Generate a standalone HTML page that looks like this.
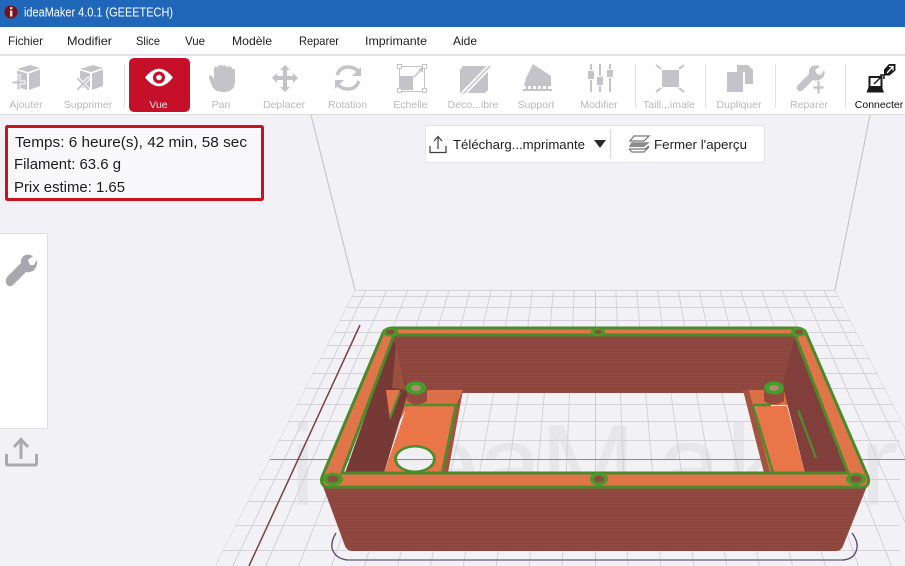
<!DOCTYPE html>
<html><head><meta charset="utf-8"><title>ideaMaker</title>
<style>html,body{margin:0;padding:0;background:#f1f1f6;width:905px;height:566px;overflow:hidden}svg{display:block;position:absolute;left:0;top:0}text{font-family:"Liberation Sans",sans-serif}</style></head>
<body>
<svg width="905" height="566" viewBox="0 0 905 566" xmlns="http://www.w3.org/2000/svg">
<defs>
<clipPath id="bed"><polygon points="355,290 835,290 975,566 215,566"/></clipPath>
<pattern id="scan" width="4" height="3" patternUnits="userSpaceOnUse"><rect width="4" height="3" fill="#91493f"/><rect width="4" height="1" fill="#8b4540"/></pattern>
<pattern id="rimtex" width="3" height="3" patternUnits="userSpaceOnUse"><rect width="3" height="3" fill="#e2764a"/><rect width="1" height="1" fill="#cf7243"/></pattern>
</defs>
<rect width="905" height="566" fill="#f1f1f6"/>

<!-- room -->
<path d="M311 115L355 290M870 115L835 290" stroke="#c6c6cd" stroke-width="1.2" fill="none"/>
<text y="505" x="290 350 415 478 540 657 726 790 860" font-size="115" fill="#e7e7eb">ideaMaker</text>
<g clip-path="url(#bed)" stroke="#d2d2d8" stroke-width="1" fill="none">
<path d="M200 290.5H900M200 296.5H900M200 307.5H900M200 320.5H900M200 332.5H900M200 345.5H900M200 358.5H900M200 373.5H900M200 388.5H900M200 404.5H900M200 421.5H900M200 440.5H900M200 479.5H900M200 501.5H900M200 525.5H900M200 550.5H900"/>
<path d="M615.8 290L627.9 566M636.6 290L660.9 566M657.4 290L693.8 566M678.2 290L726.8 566M699 290L759.7 566M719.8 290L792.6 566M740.6 290L825.6 566M761.4 290L858.5 566M782.2 290L891.5 566M803 290L924.4 566M823.8 290L957.3 566"/>
<path d="M574.2 290L562.1 566M553.4 290L529.1 566M532.6 290L496.2 566M511.8 290L463.2 566M491 290L430.3 566M470.2 290L397.4 566M449.4 290L364.4 566M428.6 290L331.5 566M407.8 290L298.5 566M387 290L265.6 566M366.2 290L232.7 566"/>
<path d="M355 290L215 566M835 290L975 566"/>
</g>
<path d="M595.5 291V566" stroke="#b9dcb9" stroke-width="1"/>
<path d="M270 459.5H905" stroke="#dc6474" stroke-width="1"/>
<path d="M360 325L249 566" stroke="#7d3f40" stroke-width="1.5"/>
<path d="M336 533Q331 541 332 548Q335 559 348 560H843Q855 559 857 548Q858 541 852 533" fill="none" stroke="#5d4c6c" stroke-width="1.4"/>
<path d="M348 560H843" stroke="#9a88a8" stroke-width="1.6"/>

<!-- model -->
<polygon points="393,335 795,335 795,393 393,393" fill="url(#scan)"/>
<!-- left interior -->
<polygon points="386,390 463,390 455,406 408,406 400,420 388,420" fill="#dc7048"/>
<polygon points="393,337 345,473 384,473 408,393" fill="#763936"/>
<polygon points="396,345 392,388 406,390" fill="#99503f"/>
<polygon points="386,390 400,390 390,420" fill="#e5744a"/>
<polygon points="407,406 455,406 441,473 384,473" fill="#ea7548"/>
<polygon points="463,390 448,473 441,473 456,404" fill="#a5533f"/>
<path d="M400 392L390 418" stroke="#4d8d2c" stroke-width="2.2"/>
<path d="M404 405H456L442 473" fill="none" stroke="#4d8d2c" stroke-width="2.6"/>
<ellipse cx="415" cy="459" rx="21" ry="14" fill="#4d8d2c"/>
<ellipse cx="415" cy="459" rx="18" ry="11.500" fill="#f0f0f4"/>
<path d="M397 459.500H433" stroke="#dc6474"/>
<!-- standoff left -->
<path d="M407 388V401Q416 408 427 401V388Z" fill="#96493f"/>
<ellipse cx="416" cy="388" rx="10.5" ry="6.5" fill="#3fa02a"/>
<ellipse cx="416" cy="388" rx="5" ry="3" fill="#b08a6a"/>
<!-- right interior -->
<polygon points="743,390 786,390 789,405 753,405 773,473 766,473" fill="#db7047"/>
<polygon points="795,336 847,473 805,473 783,387 785,375" fill="#813e3a"/>
<polygon points="743,390 749,390 770,473 764,473" fill="#a5533f"/>
<polygon points="755,406 787,406 805,473 773,473" fill="#ea7548"/>
<path d="M753 405H771M753 405L773 473" fill="none" stroke="#4d8d2c" stroke-width="2.6"/>
<path d="M798 410L816 458" stroke="#4d8d2c" stroke-width="2.4"/>
<path d="M764 388V401Q774 408 784 401V388Z" fill="#96493f"/>
<ellipse cx="774" cy="388" rx="10" ry="6.5" fill="#3fa02a"/>
<ellipse cx="774" cy="388" rx="5" ry="3" fill="#b08a6a"/>
<!-- front wall -->
<path d="M321 481L345 546Q347 551 353 551H836Q841 551 843 546L869 481Z" fill="url(#scan)"/>
<!-- rim -->
<path fill-rule="evenodd" d="M392 328H796Q803 328 806 333L868 477Q870 484 865 487H326Q320 484 322 477L383 333Q386 328 392 328ZM394 335H795L848 473H342Z" fill="url(#rimtex)" stroke="#4b8a2b" stroke-width="3"/>
<g fill="#4a9a2a">
<ellipse cx="390" cy="332" rx="8" ry="4.5"/><ellipse cx="598" cy="332" rx="7" ry="4"/><ellipse cx="799" cy="332" rx="8" ry="4.5"/>
<ellipse cx="333" cy="479" rx="10" ry="6.5"/><ellipse cx="599" cy="479" rx="9" ry="6.5"/><ellipse cx="856" cy="479" rx="10" ry="6.5"/>
</g>
<g fill="#8e4a3f">
<ellipse cx="390" cy="332" rx="4" ry="2.4"/><ellipse cx="598" cy="332" rx="3.5" ry="2"/><ellipse cx="799" cy="332" rx="4" ry="2.4"/>
<ellipse cx="333" cy="479" rx="5.5" ry="3.5"/><ellipse cx="599" cy="479" rx="5" ry="3.5"/><ellipse cx="856" cy="479" rx="5.5" ry="3.5"/>
</g>

<!-- chrome -->
<rect y="0" width="905" height="27" fill="#2067b9"/>
<circle cx="11" cy="12" r="6.5" fill="#7a1016"/>
<rect x="10" y="7" width="2.4" height="2.2" fill="#f3d9d9"/><rect x="10" y="10.5" width="2.4" height="6" fill="#f3d9d9"/>
<text x="24" y="16.5" font-size="12.500" fill="#fff" textLength="149" lengthAdjust="spacingAndGlyphs">ideaMaker 4.0.1 (GEEETECH)</text>
<rect y="27" width="905" height="28" fill="#fff"/>
<rect y="54" width="905" height="2" fill="#e4e4e6"/>
<g font-size="12" fill="#1e1e1e">
<text x="8" y="45" textLength="35" lengthAdjust="spacingAndGlyphs">Fichier</text>
<text x="67" y="45" textLength="45" lengthAdjust="spacingAndGlyphs">Modifier</text>
<text x="136" y="45" textLength="24" lengthAdjust="spacingAndGlyphs">Slice</text>
<text x="185" y="45" textLength="20" lengthAdjust="spacingAndGlyphs">Vue</text>
<text x="232" y="45" textLength="40" lengthAdjust="spacingAndGlyphs">Modèle</text>
<text x="299" y="45" textLength="40" lengthAdjust="spacingAndGlyphs">Reparer</text>
<text x="365" y="45" textLength="62" lengthAdjust="spacingAndGlyphs">Imprimante</text>
<text x="453" y="45" textLength="24" lengthAdjust="spacingAndGlyphs">Aide</text>
</g>
<rect y="56" width="905" height="58" fill="#fff"/>
<rect y="114" width="905" height="1" fill="#dcdce0"/>
<path d="M124.500 64V108M635.500 64V108M705.500 64V108M775.500 64V108M845.500 64V108" stroke="#e2e2e6"/>
<rect x="129" y="58" width="61" height="54" rx="5" fill="#c60f28"/>

<g font-size="10.500" fill="#b9b9bf" text-anchor="middle">
<text x="26" y="108">Ajouter</text>
<text x="88" y="108">Supprimer</text>
<text x="221" y="108">Pan</text>
<text x="284" y="108">Deplacer</text>
<text x="347.500" y="108">Rotation</text>
<text x="410.500" y="108">Echelle</text>
<text x="473" y="108">Deco...ibre</text>
<text x="536" y="108">Support</text>
<text x="599" y="108">Modifier</text>
<text x="669" y="108">Taill...imale</text>
<text x="739" y="108">Dupliquer</text>
<text x="809" y="108">Reparer</text>
</g>
<text x="158.500" y="108" font-size="10.500" fill="#f5e3e5" text-anchor="middle">Vue</text>
<text x="879" y="108" font-size="10.500" fill="#111" text-anchor="middle">Connecter</text>

<!-- toolbar icons -->
<g fill="#c3c3c9" stroke="none">
<!-- ajouter -->
<path d="M17 69L30 65L40 68L28 72ZM17 70.500L27 73.500V90L17 87ZM29 73.500L40 69.500V86L29 90Z"/>
<path d="M12 81H17V75H20V81H25V84H20V90H17V84H12Z" stroke="#fff" stroke-width="1"/>
<!-- supprimer -->
<path d="M80 69L93 65L103 68L91 72ZM80 70.500L90 73.500V90L80 87ZM92 73.500L103 69.500V86L92 90Z"/>
<path d="M78 77L83 82L88 77L90 79L85 84L90 89L88 91L83 86L78 91L76 89L81 84L76 79Z" stroke="#fff" stroke-width="1"/>
<!-- pan -->
<path d="M209 78Q209 74 212 76L214 79V68Q216 65 218 68V66Q220 64 222 66V66Q225 64 227 67Q230 65 232 68V69Q235 68 235 71V82Q234 92 224 92Q215 92 212 86Z"/>
<!-- move -->
<path d="M285 65L290 70H287V76H293V73L298 78L293 83V80H287V87H290L285 92L280 87H283V80H277V83L272 78L277 73V76H283V70H280Z"/>
<!-- scale -->
<path d="M399 76H413V90H399Z"/>
<path d="M417 71L423 66V73L421 71L414 78L413 77L420 70Z"/>
<!-- deco -->
<path d="M463 66H488V90L485 93H460V70Z"/>
<!-- support -->
<path d="M533 64L551 76L551 86H524L526 78Z"/>
<rect x="523" y="89" width="29" height="2"/>
<path d="M526 86h2v3h-2zM531 86h2v3h-2zM536 86h2v3h-2zM541 86h2v3h-2zM546 86h2v3h-2z"/>
<!-- modifier sliders -->
<path d="M590 64h2v6h-2zM590 80h2v12h-2zM599 64h2v12h-2zM599 86h2v6h-2zM609 64h2v5h-2zM609 78h2v14h-2z"/>
<rect x="588" y="71" width="6" height="8"/><rect x="597" y="77" width="6" height="8"/><rect x="607" y="70" width="6" height="7"/>
<!-- taille -->
<rect x="662" y="70" width="17" height="17"/>
<!-- dupliquer -->
<path d="M737 65H748L753 70V84H745V72H737Z"/>
<rect x="727" y="72" width="16" height="20"/>
<!-- reparer wrench -->
<path d="M797 89Q796 86 799 84L809 74Q808 68 813 66Q816 65 820 66L815 70L817 74L821 75L824 70Q826 76 821 79Q817 82 813 80L803 90Q799 93 797 89Z"/>
<path d="M813 86H817V80.500H820V86H824V89H820V94H817V89H813Z" stroke="#fff" stroke-width=".8"/>
</g>
<g fill="none" stroke="#c3c3c9">
<!-- scale frame -->
<path d="M399.500 66.500H424.500V91.500H399.500Z" stroke-width="1"/>
<path d="M397.500 64.500h4v4h-4zM422.500 64.500h4v4h-4zM397.500 88.500h4v4h-4zM422.500 88.500h4v4h-4z" fill="#fff" stroke-width="1"/>
<!-- rotate -->
<path d="M337 75Q340 67 348 67Q354 67 358 71M359 81Q356 89 348 89Q342 89 338 85" stroke-width="3.400"/>
<path d="M361 67V76H352ZM335 89V80H344Z" fill="#c3c3c9" stroke="none"/>
<!-- taille arrows -->
<path d="M656 65L661 69M684 65L679 69M656 92L661 88M684 92L679 88" stroke-width="2"/>
<!-- deco stripes -->
<path d="M463 94L490 66" stroke="#fff" stroke-width="5"/>
<path d="M463 94L490 66" stroke="#c3c3c9" stroke-width="1.500"/>
</g>
<path d="M145 77.500Q159 60 173 77.500Q159 95 145 77.500Z" fill="#fff"/>
<circle cx="159" cy="77.500" r="6" fill="#c60f28"/><circle cx="159" cy="77.500" r="2.800" fill="#fff"/>
<!-- connecter -->
<rect x="869.500" y="77" width="12" height="10" fill="#fff" stroke="#1a1a1a" stroke-width="2"/>
<path d="M866.500 92.500L868.500 87H882L884 92.500Z" fill="#1a1a1a"/>
<path d="M874 84L882 76M880 75H884V79" fill="none" stroke="#1a1a1a" stroke-width="1.500"/>
<path d="M889 64H895.500V70.500L889.500 75.500H884V69.500Z" fill="#1a1a1a"/>
<path d="M887 73L893 66.500M889 66.500H893V70.500" fill="none" stroke="#fff" stroke-width="1.300"/>

<!-- info box -->
<rect x="6.500" y="126.500" width="256" height="73" rx="1" fill="#f9f9fc" stroke="#c8141e" stroke-width="3"/>
<g font-size="14.500" fill="#1c1c1c">
<text x="15" y="147" textLength="232" lengthAdjust="spacingAndGlyphs">Temps: 6 heure(s), 42 min, 58 sec</text>
<text x="14" y="169" textLength="107" lengthAdjust="spacingAndGlyphs">Filament: 63.6 g</text>
<text x="14" y="192" textLength="111" lengthAdjust="spacingAndGlyphs">Prix estime: 1.65</text>
</g>

<!-- left panel -->
<rect x="-2" y="233.500" width="49.500" height="195" fill="#fff" stroke="#e0e0e4"/>
<path d="M6 283Q5 279 8 276L21 263Q20 258 25 255Q29 254 33 256L28 260L30 265L34 265L37 260Q38 267 33 271Q29 273 26 272L13 285Q8 288 6 283Z" fill="#a9a7ae"/>
<path d="M6.500 454V463.500Q6.500 465 8 465H35Q36.500 465 36.500 463.500V454" fill="none" stroke="#a9a9b0" stroke-width="3"/>
<path d="M21 459V441M14 447L21 439.500L28 447" fill="none" stroke="#a9a9b0" stroke-width="3"/>

<!-- center panel -->
<rect x="425.500" y="125.500" width="339" height="37" fill="#fff" stroke="#e4e4ea"/>
<path d="M610.500 129V159" stroke="#dcdce0" stroke-width="1.500"/>
<path d="M430 146V152.500H446V146" fill="none" stroke="#3c3c3c" stroke-width="1.200"/>
<path d="M438 149V137M434 141L438 136.500L442 141" fill="none" stroke="#3c3c3c" stroke-width="1.200"/>
<text x="453" y="149" font-size="13" fill="#222" textLength="132" lengthAdjust="spacingAndGlyphs">Télécharg...mprimante</text>
<path d="M594 140H606L600 148Z" fill="#2a2a2a"/>
<path d="M634 136H649L644 141H630ZM632 143H648L644 146H630Z" fill="none" stroke="#77777d" stroke-width="1.200"/>
<path d="M631 143H648L644 147H630Z" fill="#8a8a90"/>
<path d="M629 149H645L649 146M629 149L632 152H644L649 147" fill="none" stroke="#77777d" stroke-width="1.200"/>
<text x="654" y="149" font-size="13" fill="#222" textLength="93" lengthAdjust="spacingAndGlyphs">Fermer l'aperçu</text>
</svg>
</body></html>
